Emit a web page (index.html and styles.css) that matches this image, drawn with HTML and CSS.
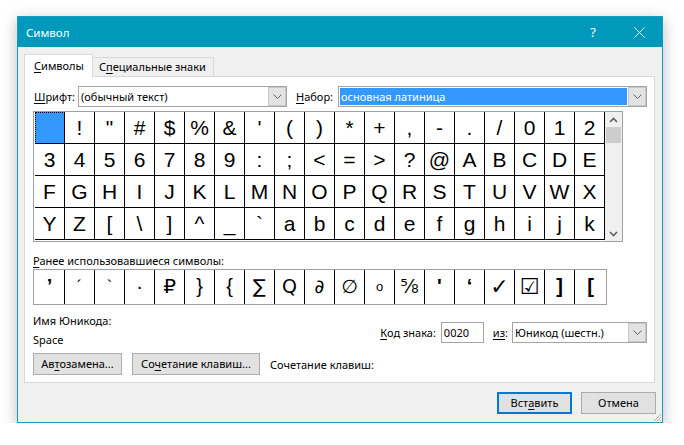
FILE: index.html
```html
<!DOCTYPE html>
<html lang="ru">
<head>
<meta charset="utf-8">
<title>Символ</title>
<link rel="stylesheet" href="styles.css">
</head>
<body>
<div class="window">
  <div class="titlebar">
    <span class="title">Символ</span>
    <div class="caption">
      <span class="cap-btn help">?</span>
      <span class="cap-btn close"><svg width="11" height="11" viewBox="0 0 11 11"><path d="M0.5 0.5L10.5 10.5M10.5 0.5L0.5 10.5" stroke="#fff" stroke-width="1"/></svg></span>
    </div>
  </div>
  <div class="body">
    <div class="tabs">
      <div class="tab active"><u>С</u>имволы</div>
      <div class="tab">С<u>п</u>ециальные знаки</div>
    </div>
    <div class="panel">
      <div class="font-row">
        <span class="lbl lbl-font"><u>Ш</u>рифт:</span>
        <div class="combo combo-font">
          <span class="combo-text">(обычный текст)</span>
          <span class="combo-btn"><svg width="9" height="5" viewBox="0 0 9 5"><path d="M0.5 0.5L4.5 4.5L8.5 0.5" fill="none" stroke="#606060"/></svg></span>
        </div>
        <span class="lbl lbl-set"><u>Н</u>абор:</span>
        <div class="combo combo-set">
          <span class="combo-text selected">основная латиница</span>
          <span class="combo-btn"><svg width="9" height="5" viewBox="0 0 9 5"><path d="M0.5 0.5L4.5 4.5L8.5 0.5" fill="none" stroke="#606060"/></svg></span>
        </div>
      </div>
      <div class="charmap">
        <div class="grid">
          <span class="c sel"></span><span class="c">!</span><span class="c">&quot;</span><span class="c">#</span><span class="c">$</span><span class="c">%</span><span class="c">&amp;</span><span class="c">'</span><span class="c">(</span><span class="c">)</span><span class="c">*</span><span class="c">+</span><span class="c">,</span><span class="c">-</span><span class="c">.</span><span class="c">/</span><span class="c">0</span><span class="c">1</span><span class="c">2</span>
          <span class="c">3</span><span class="c">4</span><span class="c">5</span><span class="c">6</span><span class="c">7</span><span class="c">8</span><span class="c">9</span><span class="c">:</span><span class="c">;</span><span class="c">&lt;</span><span class="c">=</span><span class="c">&gt;</span><span class="c">?</span><span class="c">@</span><span class="c">A</span><span class="c">B</span><span class="c">C</span><span class="c">D</span><span class="c">E</span>
          <span class="c">F</span><span class="c">G</span><span class="c">H</span><span class="c">I</span><span class="c">J</span><span class="c">K</span><span class="c">L</span><span class="c">M</span><span class="c">N</span><span class="c">O</span><span class="c">P</span><span class="c">Q</span><span class="c">R</span><span class="c">S</span><span class="c">T</span><span class="c">U</span><span class="c">V</span><span class="c">W</span><span class="c">X</span>
          <span class="c">Y</span><span class="c">Z</span><span class="c">[</span><span class="c">\</span><span class="c">]</span><span class="c">^</span><span class="c">_</span><span class="c">`</span><span class="c">a</span><span class="c">b</span><span class="c">c</span><span class="c">d</span><span class="c">e</span><span class="c">f</span><span class="c">g</span><span class="c">h</span><span class="c">i</span><span class="c">j</span><span class="c">k</span>
        </div>
        <div class="scrollbar">
          <span class="sb-btn"><svg width="9" height="6" viewBox="0 0 9 6"><path d="M1 5L4.5 1.5L8 5" fill="none" stroke="#606060" stroke-width="1.6"/></svg></span>
          <span class="sb-thumb"></span>
          <span class="sb-track"></span>
          <span class="sb-btn"><svg width="9" height="6" viewBox="0 0 9 6"><path d="M1 1L4.5 4.5L8 1" fill="none" stroke="#606060" stroke-width="1.6"/></svg></span>
        </div>
      </div>
      <div class="recent-label"><u>Р</u>анее использовавшиеся символы:</div>
      <div class="recent">
        <span class="r b">’</span><span class="r sm">´</span><span class="r sm">`</span><span class="r">·</span><span class="r">₽</span><span class="r">}</span><span class="r">{</span><span class="r dv">∑</span><span class="r dv">Ԛ</span><span class="r dv it">∂</span><span class="r dv">∅</span><span class="r tiny">o</span><span class="r dv">⅝</span><span class="r b">'</span><span class="r b">‘</span><span class="r dv b big">✓</span><span class="r dv big">☑</span><span class="r b">]</span><span class="r b last">[</span>
      </div>
      <div class="info">
        <div class="info-left">
          <div>Имя Юникода:</div>
          <div class="uname">Space</div>
        </div>
        <div class="info-right">
          <span class="lbl-code"><u>К</u>од знака:</span>
          <span class="input">0020</span>
          <span class="lbl-from"><u>из</u>:</span>
          <div class="combo combo-from">
            <span class="combo-text">Юникод (шестн.)</span>
            <span class="combo-btn"><svg width="9" height="5" viewBox="0 0 9 5"><path d="M0.5 0.5L4.5 4.5L8.5 0.5" fill="none" stroke="#606060"/></svg></span>
          </div>
        </div>
      </div>
      <div class="btn-row">
        <span class="btn btn-auto">Ав<u>т</u>озамена...</span>
        <span class="btn btn-keys">Со<u>ч</u>етание клавиш...</span>
        <span class="keys-text">Сочетание клавиш:</span>
      </div>
    </div>
    <div class="footer">
      <span class="btn btn-ok">Вст<u>а</u>вить</span>
      <span class="btn btn-cancel">Отмена</span>
    </div>
  </div>
  <svg class="grip" width="10" height="10" viewBox="0 0 10 10"><path d="M9 2L2 9M9 5L5 9M9 8L8 9" stroke="#b0b0b0" stroke-width="1"/></svg>
</div>
</body>
</html>
```
FILE: styles.css
```css
* { box-sizing: border-box; }
body {
  margin: 0;
  background: #fff;
  font-family: "Segoe UI", "Noto Sans", sans-serif;
  font-size: 11px;
  color: #000;
}
u { text-decoration: underline; text-underline-offset: 2px; }

.window {
  position: relative;
  margin: 16px 0 0 17px;
  width: 646px;
  height: 407px;
  border: 1px solid #1a9cc2;
  background: #f0f0f0;
  box-shadow: 0 4px 14px rgba(0,0,0,0.28);
  display: flex;
  flex-direction: column;
}
.titlebar {
  flex: none;
  height: 30px;
  background: #0099bc;
  color: #fff;
  display: flex;
  align-items: center;
  font-size: 11.5px;
}
.title { padding-left: 8px; }
.caption { margin-left: auto; display: flex; height: 100%; }
.cap-btn {
  width: 46px;
  display: flex;
  align-items: center;
  justify-content: center;
}
.help { font-size: 13px; }

.body { padding: 7px 7px 0 6px; }
.tabs { display: flex; align-items: flex-end; height: 22px; }
.tab {
  height: 19px;
  width: 122px;
  margin-left: -1px;
  border: 1px solid #d9d9d9;
  border-bottom: none;
  background: #f0f0f0;
  line-height: 18px;
  padding-left: 6px;
  white-space: nowrap;
}
.tab.active {
  position: relative;
  z-index: 1;
  width: 69px;
  height: 23px;
  margin: 0 0 -1px 0;
  background: #fff;
  line-height: 21px;
  padding-left: 9px;
}
.panel {
  height: 307px;
  background: #fff;
  border: 1px solid #d9d9d9;
  padding: 9px 7px 0 8px;
}

.font-row { display: flex; align-items: center; height: 21px; padding-left: 1px; }
.lbl { white-space: nowrap; }
.lbl-font { width: 44px; }
.lbl-set { width: 42px; margin-left: 9px; }
.combo {
  display: flex;
  height: 21px;
  border: 1px solid #a5a5a5;
  background: #fff;
}
.combo-font { width: 209px; }
.combo-set { width: 309px; }
.combo-from { width: 135px; }
.combo-text {
  flex: 1;
  padding-left: 2px;
  line-height: 19px;
  white-space: nowrap;
  overflow: hidden;
}
.combo-text.selected {
  margin: 1px;
  padding-left: 1px;
  line-height: 17px;
  background: #3399ff;
  color: #fff;
}
.combo-btn {
  width: 18px;
  background: #e3e3e3;
  border: 1px solid #c8c8c8;
  display: flex;
  align-items: center;
  justify-content: center;
}

.charmap {
  margin-top: 4px;
  display: flex;
  align-items: flex-start;
  width: 590px;
  height: 131px;
  border: 1px solid #a0a0a0;
  padding-left: 1px;
}
.grid {
  display: grid;
  grid-template-columns: repeat(19, 30px);
  grid-auto-rows: 32px;
}
.c {
  border-right: 1px solid #000;
  border-bottom: 1px solid #000;
  text-align: center;
  font-family: "Liberation Sans", Arial, sans-serif;
  font-size: 21px;
  line-height: 31px;
}
.c.sel {
  background: #3399ff;
  outline: 1px dotted #000;
  outline-offset: -1px;
}
.scrollbar {
  width: 17px;
  height: 129px;
  background: #f0f0f0;
  display: flex;
  flex-direction: column;
}
.sb-btn { height: 15px; display: flex; align-items: center; justify-content: center; }
.sb-thumb { height: 16px; margin: 0 1px; background: #cdcdcd; }
.sb-track { flex: 1; }

.recent-label { margin-top: 11px; line-height: 16px; height: 16px; }
.recent {
  display: flex;
  width: 574px;
  height: 36px;
  border: 1px solid #a0a0a0;
  padding-left: 1px;
}
.r {
  width: 30px;
  border-right: 1px solid #000;
  text-align: center;
  font-family: "Liberation Sans", "DejaVu Sans", sans-serif;
  font-size: 20px;
  line-height: 33px;
}
.r.last { width: 31px; border-right: none; }
.r.b { font-weight: bold; }
.r.sm { font-size: 16px; }
.r.tiny { font-size: 13px; }
.r.dv { font-family: "DejaVu Sans", sans-serif; font-size: 19px; }
.r.dv.big { font-size: 22px; }
.r.it { font-style: italic; }

.info { display: flex; margin-top: 8px; height: 35px; }
.info-left { line-height: 16px; }
.uname { margin-top: 3px; }
.info-right {
  margin-left: auto;
  margin-top: 9px;
  display: flex;
  align-items: center;
  height: 21px;
}
.lbl-code { margin-right: 5px; }
.input {
  width: 43px;
  height: 21px;
  border: 1px solid #a5a5a5;
  background: #fff;
  padding-left: 2px;
  line-height: 19px;
  margin-right: 9px;
}
.lbl-from { margin-right: 4px; }

.btn-row { display: flex; align-items: center; margin-top: 5px; height: 22px; }
.btn {
  height: 22px;
  border: 1px solid #adadad;
  background: #e1e1e1;
  text-align: center;
  line-height: 20px;
  white-space: nowrap;
}
.btn-auto { width: 89px; }
.btn-keys { width: 128px; margin-left: 10px; }
.keys-text { margin-left: 10px; }

.footer {
  display: flex;
  justify-content: flex-end;
  gap: 9px;
  margin-top: 9px;
  margin-right: -1px;
}
.btn-ok { width: 75px; border: 2px solid #0078d7; line-height: 18px; }
.btn-cancel { width: 75px; }

.grip { position: absolute; right: 0; bottom: 0; }
```
